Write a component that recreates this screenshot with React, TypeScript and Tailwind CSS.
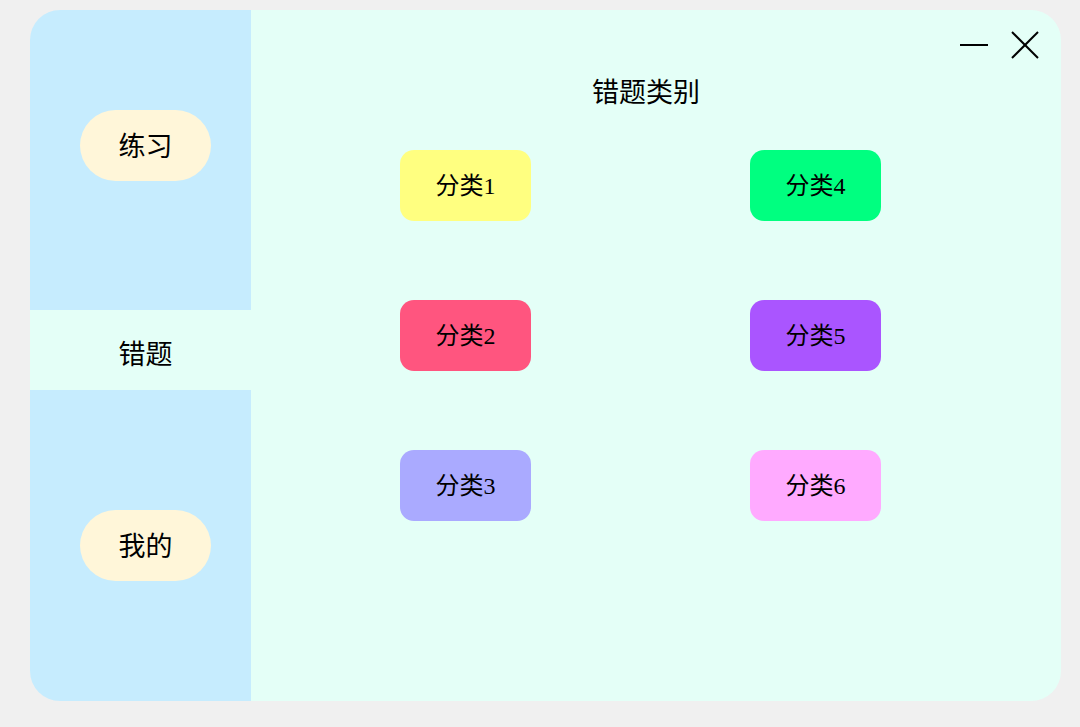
import React from "react";

const font = { fontFamily: '"Liberation Serif", "Noto Sans CJK SC", serif' };

const cats = [
  { label: "分类1", bg: "bg-[#ffff80]" },
  { label: "分类4", bg: "bg-[#00ff80]" },
  { label: "分类2", bg: "bg-[#ff557f]" },
  { label: "分类5", bg: "bg-[#aa55ff]" },
  { label: "分类3", bg: "bg-[#aaaaff]" },
  { label: "分类6", bg: "bg-[#ffaaff]" },
];

export default function App() {
  return (
    <div
      className="w-[1080px] h-[727px] bg-[#f0f0f0] pt-[10px] pl-[30px] text-black"
      style={font}
    >
      <div className="w-[1031px] h-[691px] rounded-[30px] overflow-hidden flex">
        {/* Sidebar */}
        <div className="w-[221px] h-full bg-[#c6ecfe] flex flex-col pt-[100px]">
          <div className="ml-[50px] w-[131px] h-[71px] rounded-full bg-[#fff6d9] flex items-center justify-center pt-[3px] text-[27px] leading-none">
            练习
          </div>
          <div className="mt-[129px] h-[80px] bg-[#e4fff7] flex items-center justify-center pl-[10px] pt-[10px] text-[27px] leading-none">
            错题
          </div>
          <div className="mt-[120px] ml-[50px] w-[131px] h-[71px] rounded-full bg-[#fff6d9] flex items-center justify-center pt-[3px] text-[27px] leading-none">
            我的
          </div>
        </div>
        {/* Main */}
        <div className="flex-1 h-full bg-[#e4fff7] flex flex-col">
          <div className="flex justify-end items-center pt-[21px] pr-[22px] gap-[23px]">
            <svg width="28" height="28" viewBox="0 0 28 28">
              <line x1="0" y1="14" x2="28" y2="14" stroke="#000" strokeWidth="2" />
            </svg>
            <svg width="28" height="28" viewBox="0 0 28 28">
              <line x1="1" y1="1" x2="27" y2="27" stroke="#000" strokeWidth="2" />
              <line x1="27" y1="1" x2="1" y2="27" stroke="#000" strokeWidth="2" />
            </svg>
          </div>
          <div className="mt-[18px] h-[32px] leading-[32px] text-[27px] text-center pr-[20px]">
            错题类别
          </div>
          <div className="mt-[41px] ml-[149px] grid grid-cols-[131px_131px] gap-x-[219px] gap-y-[79px]">
            {cats.map((c) => (
              <div
                key={c.label}
                className={`${c.bg} w-[131px] h-[71px] rounded-[14px] flex items-center justify-center text-[24px] leading-none`}
              >
                {c.label}
              </div>
            ))}
          </div>
        </div>
      </div>
    </div>
  );
}
